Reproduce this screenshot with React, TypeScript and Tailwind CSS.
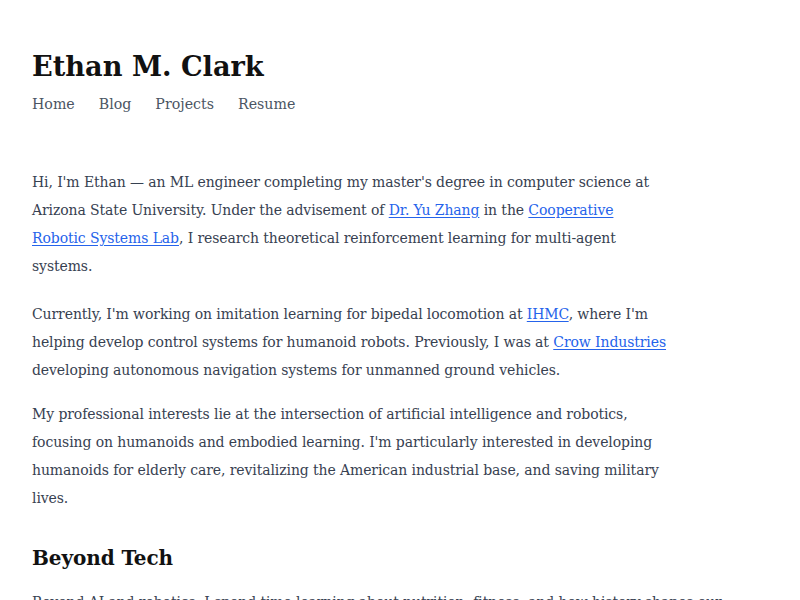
import React from "react";

const A = ({ children }: { children: React.ReactNode }) => (
  <a href="#" className="text-[#2563eb] underline underline-offset-2">
    {children}
  </a>
);

export default function App() {
  return (
    <div className="min-h-screen bg-white font-['DejaVu_Serif',serif] text-[#374151]">
      <div className="px-8 pt-[46px] w-[800px]">
        <header>
          <h1 className="text-[27.2px] leading-[40px] font-bold text-[#111111]">Ethan M. Clark</h1>
          <nav className="mt-[6px] flex gap-6 text-[14.2px] leading-6 text-[#4b5563]">
            <a href="#">Home</a>
            <a href="#">Blog</a>
            <a href="#">Projects</a>
            <a href="#">Resume</a>
          </nav>
        </header>
        <main className="mt-[52px] text-[14px] tracking-[-0.1px] leading-[28px]">
          <section className="w-[637px]">
            <p>
              Hi, I'm Ethan — an ML engineer completing my master's degree in computer science at
              Arizona State University. Under the advisement of <A>Dr. Yu Zhang</A> in the{" "}
              <A>Cooperative Robotic Systems Lab</A>, I research theoretical reinforcement learning
              for multi-agent systems.
            </p>
            <p className="mt-5">
              Currently, I'm working on imitation learning for bipedal locomotion at <A>IHMC</A>,
              where I'm helping develop control systems for humanoid robots. Previously, I was at{" "}
              <A>Crow Industries</A> developing autonomous navigation systems for unmanned ground
              vehicles.
            </p>
            <p className="mt-4">
              My professional interests lie at the intersection of artificial intelligence and
              robotics, focusing on humanoids and embodied learning. I'm particularly interested in
              developing humanoids for elderly care, revitalizing the American industrial base, and
              saving military lives.
            </p>
          </section>
          <section className="w-[716px]">
            <h2 className="mt-[30px] text-[20px] leading-[32px] font-bold text-[#111111]">Beyond Tech</h2>
            <p className="mt-[14px]">
              Beyond AI and robotics, I spend time learning about nutrition, fitness, and how history
              shapes our world today.
            </p>
          </section>
        </main>
      </div>
    </div>
  );
}
